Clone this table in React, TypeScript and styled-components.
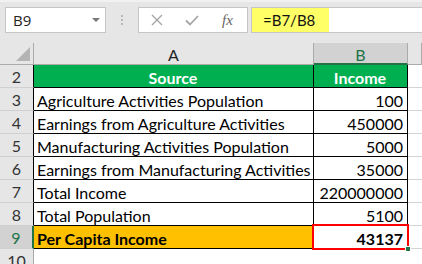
import React from "react";
import styled, { createGlobalStyle, css } from "styled-components";

const GlobalStyle = createGlobalStyle`
  html, body {
    margin: 0;
    padding: 0;
    background: #ffffff;
    overflow: hidden;
  }
  body {
    font-family: Lato, "Liberation Sans", sans-serif;
  }
`;

const Page = styled.div`
  width: 422px;
  height: 264px;
  overflow: hidden;
  background: #ffffff;
`;

const Toolbar = styled.div`
  height: 43px;
  box-sizing: border-box;
  background: #e6e6e6;
  border-top: 2px solid #f1f1f1;
  padding: 5px 0 0 5px;
  display: flex;
  align-items: flex-start;
`;

const NameBox = styled.div`
  width: 101px;
  height: 26px;
  box-sizing: border-box;
  background: #ffffff;
  border: 1px solid #c6c6c6;
  display: flex;
  align-items: center;
  justify-content: space-between;
  padding: 0 5px 0 7px;
  font-family: "Open Sans", "Liberation Sans", sans-serif;
  font-size: 15px;
  color: #222222;
`;

const Caret = styled.span`
  width: 0;
  height: 0;
  border-left: 4px solid transparent;
  border-right: 4px solid transparent;
  border-top: 4px solid #777777;
`;

const Grip = styled.div`
  width: 32px;
  height: 26px;
  display: flex;
  flex-direction: column;
  align-items: center;
  justify-content: center;
  gap: 2px;

  span {
    width: 2px;
    height: 2px;
    background: #b8b8b8;
  }
`;

const FxBox = styled.div`
  width: 110px;
  height: 26px;
  box-sizing: border-box;
  background: #ffffff;
  border: 1px solid #c6c6c6;
  display: flex;
  align-items: center;
  padding-left: 12px;
  gap: 22px;
`;

const FxLabel = styled.span`
  font-family: "Liberation Serif", serif;
  font-style: italic;
  font-size: 15px;
  color: #666666;
  margin-left: 1px;
`;

const FormulaInput = styled.div`
  flex: 1;
  height: 26px;
  box-sizing: border-box;
  margin-left: 3px;
  background: #ffffff;
  border-top: 1px solid #c6c6c6;
  border-bottom: 1px solid #c6c6c6;
  border-left: 1px solid #c6c6c6;
  display: flex;
`;

const FormulaText = styled.span`
  width: 77px;
  height: 100%;
  box-sizing: border-box;
  background: #ffff66;
  padding-left: 11px;
  display: flex;
  align-items: center;
  font-size: 15px;
  color: #111111;
`;

const Sheet = styled.div`
  display: grid;
  grid-template-columns: 34px 280px 94px 1fr;
  grid-template-rows: 22px repeat(9, 23px);
`;

type Tone = "plain" | "head" | "total" | "selected";

const ColHead = styled.div<{ $selected?: boolean }>`
  box-sizing: border-box;
  background: ${(p) => (p.$selected ? "#d2d2d2" : "#e6e6e6")};
  color: ${(p) => (p.$selected ? "#217346" : "#222222")};
  border-right: 1px solid #ababab;
  border-bottom: ${(p) => (p.$selected ? "2px solid #217346" : "1px solid #ababab")};
  display: flex;
  align-items: center;
  justify-content: center;
  font-size: 16px;
  padding-top: 2px;
`;

const Corner = styled.div`
  position: relative;
  box-sizing: border-box;
  background: #e6e6e6;
  border-right: 1px solid #ababab;
  border-bottom: 1px solid #ababab;

  &::after {
    content: "";
    position: absolute;
    right: 3px;
    bottom: 3px;
    width: 0;
    height: 0;
    border-left: 14px solid transparent;
    border-bottom: 14px solid #b4b4b4;
  }
`;

const RowHead = styled.div<{ $selected?: boolean; $edge?: boolean }>`
  box-sizing: border-box;
  background: ${(p) => (p.$selected ? "#d2d2d2" : "#e6e6e6")};
  color: ${(p) => (p.$selected ? "#217346" : "#333333")};
  border-bottom: 1px solid #d0d0d0;
  border-right: ${(p) =>
    p.$selected ? "2px solid #217346" : p.$edge ? "1px solid #000000" : "1px solid #ababab"};
  display: flex;
  align-items: center;
  justify-content: center;
  font-size: 16px;
  padding-top: 1px;
`;

const Cell = styled.div<{ $tone?: Tone; $right?: boolean }>`
  position: relative;
  box-sizing: border-box;
  border-right: 1px solid #000000;
  border-bottom: 1px solid #000000;
  display: flex;
  align-items: center;
  justify-content: ${(p) => (p.$right ? "flex-end" : "flex-start")};
  padding: 2px 4px 0 3px;
  font-size: 16px;
  color: #000000;
  white-space: nowrap;
  background: #ffffff;

  ${(p) =>
    p.$tone === "head" &&
    css`
      background: #00b050;
      color: #ffffff;
      font-weight: 700;
      justify-content: center;
    `}
  ${(p) =>
    p.$tone === "total" &&
    css`
      background: #ffc000;
      font-weight: 700;
    `}
  ${(p) =>
    p.$tone === "selected" &&
    css`
      font-weight: 700;
      &::before {
        content: "";
        position: absolute;
        left: -2px;
        top: -2px;
        right: -2px;
        bottom: -2px;
        border: 2px solid #ff0000;
      }
      &::after {
        content: "";
        position: absolute;
        right: -4px;
        bottom: -4px;
        width: 4px;
        height: 4px;
        background: #217346;
        border: 1px solid #ffffff;
      }
    `}
`;

const BlankCell = styled.div<{ $grid?: boolean }>`
  box-sizing: border-box;
  background: #ffffff;
  border-bottom: ${(p) => (p.$grid ? "1px solid #d4d4d4" : "none")};
`;

const CrossIcon = () => (
  <svg width="12" height="12" viewBox="0 0 12 12">
    <path d="M1 1 L11 11 M11 1 L1 11" stroke="#a6a6a6" strokeWidth="1.4" fill="none" />
  </svg>
);

const CheckIcon = () => (
  <svg width="14" height="11" viewBox="0 0 14 11">
    <path d="M1 5.5 L5 9.5 L13 1" stroke="#a6a6a6" strokeWidth="1.8" fill="none" />
  </svg>
);

const rows: { label: string; value: string; tone?: Tone }[] = [
  { label: "Source", value: "Income", tone: "head" },
  { label: "Agriculture Activities Population", value: "100" },
  { label: "Earnings from Agriculture Activities", value: "450000" },
  { label: "Manufacturing Activities Population", value: "5000" },
  { label: "Earnings from Manufacturing Activities", value: "35000" },
  { label: "Total Income", value: "220000000" },
  { label: "Total Population", value: "5100" },
  { label: "Per Capita Income", value: "43137", tone: "total" },
];

export default function App() {
  return (
    <Page>
      <GlobalStyle />
      <Toolbar>
        <NameBox>
          B9
          <Caret />
        </NameBox>
        <Grip>
          <span />
          <span />
          <span />
        </Grip>
        <FxBox>
          <CrossIcon />
          <CheckIcon />
          <FxLabel>fx</FxLabel>
        </FxBox>
        <FormulaInput>
          <FormulaText>=B7/B8</FormulaText>
        </FormulaInput>
      </Toolbar>
      <Sheet>
        <Corner />
        <ColHead>A</ColHead>
        <ColHead $selected>B</ColHead>
        <ColHead />
        {rows.map((r, i) => {
          const n = i + 2;
          const isTotal = r.tone === "total";
          return (
            <React.Fragment key={n}>
              <RowHead $selected={isTotal} $edge>
                {n}
              </RowHead>
              <Cell $tone={r.tone}>{r.label}</Cell>
              <Cell $tone={isTotal ? "selected" : r.tone} $right={r.tone !== "head"}>
                {r.value}
              </Cell>
              <BlankCell $grid />
            </React.Fragment>
          );
        })}
        <RowHead>10</RowHead>
        <BlankCell />
        <BlankCell />
        <BlankCell />
      </Sheet>
    </Page>
  );
}
